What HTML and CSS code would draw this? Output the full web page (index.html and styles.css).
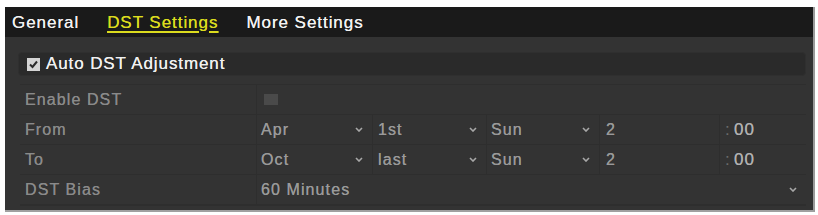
FILE: index.html
```html
<!DOCTYPE html>
<html>
<head>
<meta charset="utf-8">
<link rel="stylesheet" href="styles.css">
</head>
<body>
<div class="panel">
  <div class="tabs">
    <span class="tab">General</span>
    <span class="tab active">DST Settings</span>
    <span class="tab">More Settings</span>
  </div>
  <div class="content">
    <div class="autobox">
      <span class="check"><svg width="11" height="11" viewBox="0 0 11 11"><path d="M2 5.5 L4.5 8 L9 2.5" fill="none" stroke="#2a2a2a" stroke-width="2"/></svg></span>
      <span class="autolabel">Auto DST Adjustment</span>
    </div>
    <div class="table">
      <div class="row">
        <div class="label">Enable DST</div>
        <div class="cell wide"><span class="smallbox"></span></div>
      </div>
      <div class="row">
        <div class="label">From</div>
        <div class="cell c1">Apr<svg class="arr" viewBox="0 0 8 5"><path d="M1 1 L4 4 L7 1" fill="none" stroke="#a8a8a8" stroke-width="1.6"/></svg></div>
        <div class="cell c2">1st<svg class="arr" viewBox="0 0 8 5"><path d="M1 1 L4 4 L7 1" fill="none" stroke="#a8a8a8" stroke-width="1.6"/></svg></div>
        <div class="cell c3">Sun<svg class="arr" viewBox="0 0 8 5"><path d="M1 1 L4 4 L7 1" fill="none" stroke="#a8a8a8" stroke-width="1.6"/></svg></div>
        <div class="cell c4">2</div>
        <div class="cell c5"><span class="colon">:</span>00</div>
      </div>
      <div class="row">
        <div class="label">To</div>
        <div class="cell c1">Oct<svg class="arr" viewBox="0 0 8 5"><path d="M1 1 L4 4 L7 1" fill="none" stroke="#a8a8a8" stroke-width="1.6"/></svg></div>
        <div class="cell c2">last<svg class="arr" viewBox="0 0 8 5"><path d="M1 1 L4 4 L7 1" fill="none" stroke="#a8a8a8" stroke-width="1.6"/></svg></div>
        <div class="cell c3">Sun<svg class="arr" viewBox="0 0 8 5"><path d="M1 1 L4 4 L7 1" fill="none" stroke="#a8a8a8" stroke-width="1.6"/></svg></div>
        <div class="cell c4">2</div>
        <div class="cell c5"><span class="colon">:</span>00</div>
      </div>
      <div class="row">
        <div class="label">DST Bias</div>
        <div class="cell wide">60 Minutes<svg class="arr" viewBox="0 0 8 5"><path d="M1 1 L4 4 L7 1" fill="none" stroke="#a8a8a8" stroke-width="1.6"/></svg></div>
      </div>
    </div>
  </div>
</div>
</body>
</html>
```

FILE: styles.css
```css
html, body {
  margin: 0;
  padding: 0;
  background: #ffffff;
}
body {
  font-family: "Liberation Sans", Arial, sans-serif;
}
.panel {
  margin: 7px 0 0 5px;
  width: 810px;
  height: 205px;
  background: #333333;
  border-right: 2px solid #9a9a9a;
  border-bottom: 2px solid #a0a0a0;
  box-sizing: border-box;
}
.tabs {
  height: 30px;
  background: #1a1a1a;
  display: flex;
  align-items: center;
  padding-left: 7px;
  padding-top: 1px;
  box-sizing: border-box;
}
.tab {
  color: #f2f2f2;
  font-size: 17px;
  letter-spacing: 0.95px;
  text-shadow: 0 0 0.6px #f2f2f2;
  margin-right: 28px;
}
.tab.active {
  color: #dcdc1e;
  text-shadow: 0 0 0.6px #dcdc1e;
  text-decoration: underline;
  text-underline-offset: 3px;
  text-decoration-thickness: 2px;
}
.content {
  padding: 15px 0 0 13px;
}
.autobox {
  width: 788px;
  height: 24px;
  box-sizing: border-box;
  background: #2a2a2a;
  border: 1px solid #2f2f2f;
  border-radius: 4px;
  display: flex;
  align-items: center;
  padding-left: 8px;
}
.check {
  width: 13px;
  height: 13px;
  background: #d4d4d4;
  display: flex;
  align-items: center;
  justify-content: center;
  margin-right: 6px;
}
.autolabel {
  color: #f0f0f0;
  font-size: 17px;
  letter-spacing: 0.9px;
  text-shadow: 0 0 0.6px #f0f0f0;
}
.table {
  margin: 8px 0 0 2px;
  width: 786px;
  background: #2e2e2e;
  display: flex;
  flex-direction: column;
  gap: 1px;
  padding: 1px 0 2px 0;
}
.row {
  display: flex;
  height: 29px;
  gap: 1px;
}
.label {
  width: 236px;
  padding-left: 5px;
  box-sizing: border-box;
  display: flex;
  align-items: center;
  color: #8a8a8a;
  font-size: 16px;
  letter-spacing: 1.1px;
  text-shadow: 0 0 0.5px #8a8a8a;
  background: #333333;
}
.cell {
  display: flex;
  align-items: center;
  box-sizing: border-box;
  padding-left: 4px;
  padding-right: 9px;
  color: #9a9a9a;
  font-size: 16px;
  letter-spacing: 1.1px;
  text-shadow: 0 0 0.5px #9a9a9a;
  background: #333333;
}
.arr {
  width: 8px;
  height: 5px;
  margin-left: auto;
}
.c1 { width: 115px; }
.c2 { width: 113px; padding-left: 5px; }
.c3 { width: 112px; }
.c4 { width: 119px; padding-left: 6px; }
.c5 { flex: 1; font-size: 17px; color: #b0b0b0; text-shadow: 0 0 0.5px #b0b0b0; padding-left: 5px; letter-spacing: 1.2px; }
.wide { flex: 1; }
.colon {
  color: #6a6a6a;
  text-shadow: none;
  margin-right: 3px;
}
.smallbox {
  width: 14px;
  height: 11px;
  background: #4a4a4a;
  margin-left: 3px;
}
```
